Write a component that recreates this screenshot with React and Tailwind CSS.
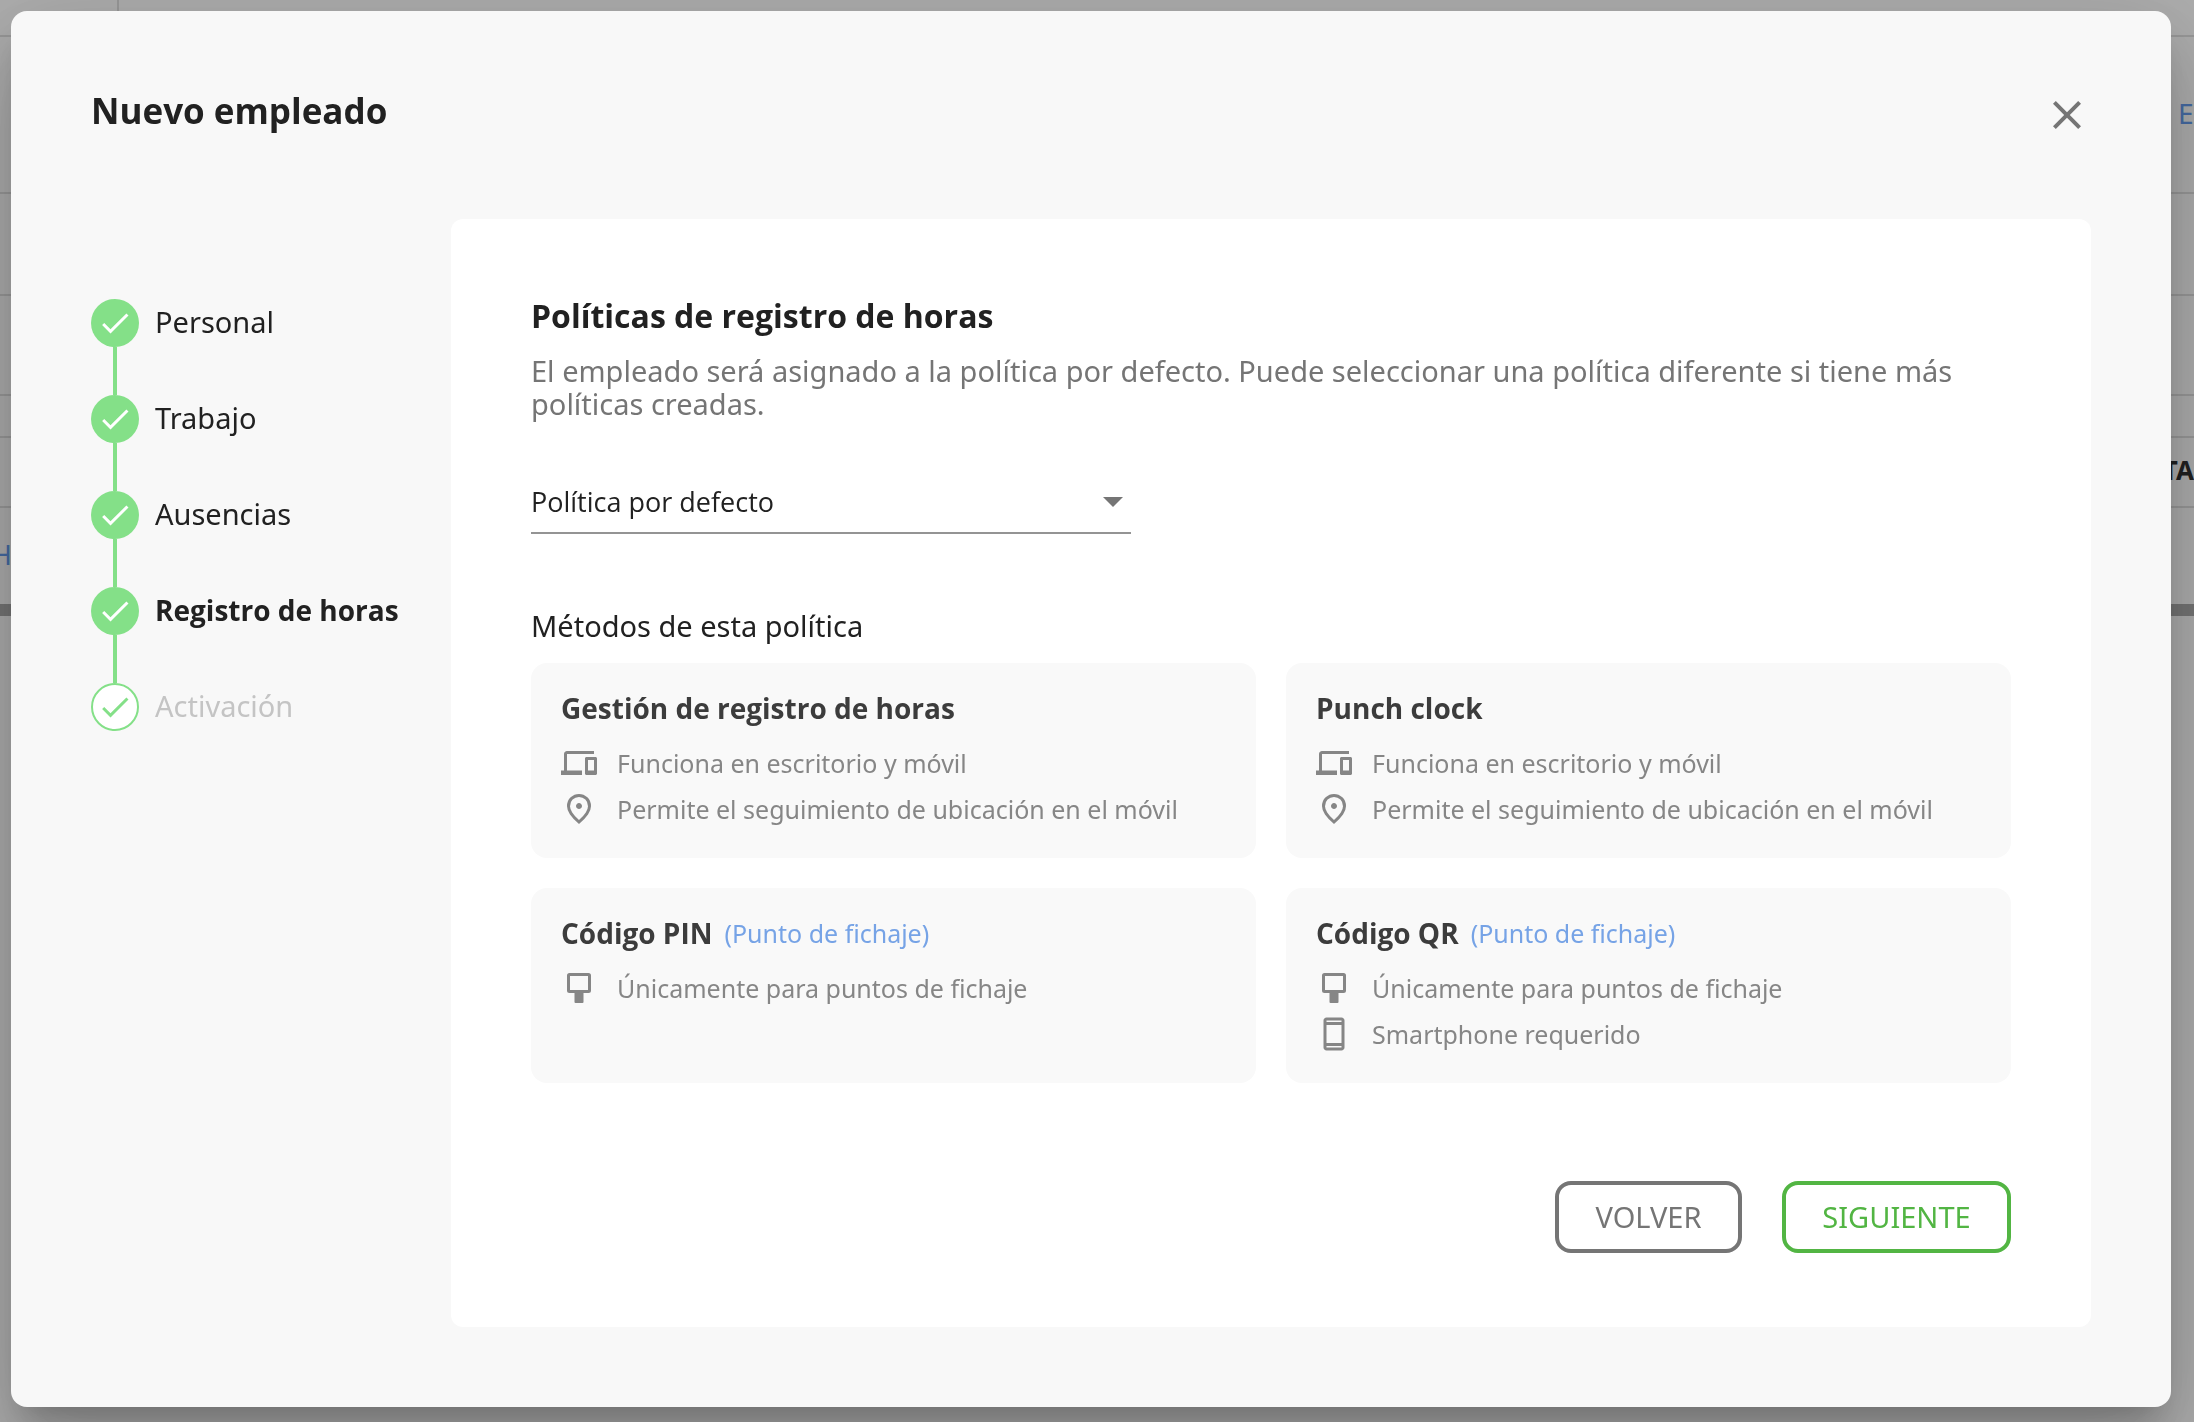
import React from "react";
import { MdCheck, MdClose, MdDevices } from "react-icons/md";

const steps = [
  { label: "Personal", state: "done" },
  { label: "Trabajo", state: "done" },
  { label: "Ausencias", state: "done" },
  { label: "Registro de horas", state: "current" },
  { label: "Activación", state: "pending" },
];

const PlaceIcon = () => (
  <svg viewBox="0 -960 960 960" className="size-9 shrink-0" fill="currentColor" aria-hidden="true">
    <path d="M480-480q33 0 56.5-23.5T560-560q0-33-23.5-56.5T480-640q-33 0-56.5 23.5T400-560q0 33 23.5 56.5T480-480Zm0 294q122-112 181-203.5T720-552q0-109-69.5-178.5T480-800q-101 0-170.5 69.5T240-552q0 71 59 162.5T480-186Zm0 106Q319-217 239.5-334.5T160-552q0-150 96.5-239T480-880q127 0 223.5 89T800-552q0 100-79.5 217.5T480-80Z" />
  </svg>
);

const KioskIcon = () => (
  <svg viewBox="0 0 36 36" className="size-9 shrink-0" aria-hidden="true">
    <rect x="7.5" y="4.5" width="21" height="17" rx="1" fill="none" stroke="currentColor" strokeWidth="3" />
    <path d="M13.5 22h9v10a1 1 0 0 1-1 1h-7a1 1 0 0 1-1-1z" fill="currentColor" />
  </svg>
);

const PhoneIcon = () => (
  <svg viewBox="0 0 24 24" className="size-9 shrink-0" fill="currentColor" aria-hidden="true">
    <path d="M17 1H7c-1.1 0-2 .9-2 2v18c0 1.1.9 2 2 2h10c1.1 0 2-.9 2-2V3c0-1.1-.9-2-2-2zM7 4V3h10v1H7zm0 14V6h10v12H7zm0 3v-1h10v1H7z" />
  </svg>
);

const DevicesIcon = () => <MdDevices className="size-9 shrink-0" />;

const methods = [
  {
    title: "Gestión de registro de horas",
    features: [
      { icon: DevicesIcon, text: "Funciona en escritorio y móvil" },
      { icon: PlaceIcon, text: "Permite el seguimiento de ubicación en el móvil" },
    ],
  },
  {
    title: "Punch clock",
    features: [
      { icon: DevicesIcon, text: "Funciona en escritorio y móvil" },
      { icon: PlaceIcon, text: "Permite el seguimiento de ubicación en el móvil" },
    ],
  },
  {
    title: "Código PIN",
    link: "(Punto de fichaje)",
    features: [{ icon: KioskIcon, text: "Únicamente para puntos de fichaje" }],
  },
  {
    title: "Código QR",
    link: "(Punto de fichaje)",
    features: [
      { icon: KioskIcon, text: "Únicamente para puntos de fichaje" },
      { icon: PhoneIcon, text: "Smartphone requerido" },
    ],
  },
];

// Page that stays visible around the edges of the dialog
const Backdrop = () => (
  <div className="min-h-screen bg-white text-[28px] leading-8" aria-hidden="true">
    <div className="flex h-[37px] border-b-2 border-[#e0e0e0]">
      <div className="w-[119px] border-r-2 border-[#e0e0e0]" />
    </div>
    <div className="flex h-[157px] items-center justify-end border-b-2 border-[#e0e0e0] pb-1">
      <span className="w-4 text-[#669df0]">E</span>
    </div>
    <div className="h-[102px] border-b-2 border-[#e0e0e0]" />
    <div className="h-[100px] border-b-2 border-[#e0e0e0]" />
    <div className="h-[42px] border-b-2 border-[#e0e0e0]" />
    <div className="flex h-[70px] items-center justify-end border-b-2 border-[#e0e0e0] pb-1">
      <span className="text-[26px] font-bold text-[#303030]">TA</span>
    </div>
    <div className="flex h-24 items-center pb-1">
      <span className="flex w-3 justify-end text-[#669df0]">H</span>
    </div>
    <div className="h-3 bg-[#acacac]" />
  </div>
);

const Stepper = () => (
  <ol className="flex w-[360px] shrink-0 flex-col pt-20">
    {steps.map(({ label, state }, index) => (
      <li
        key={label}
        className={`flex gap-4 leading-[46px] ${
          state === "pending"
            ? "text-[29px] text-[#c4c4c4]"
            : state === "current"
              ? "font-['Open_Sans',sans-serif] text-[28px] font-bold text-[#212121]"
              : "text-[29px] text-[#212121]"
        }`}
      >
        <div className="flex flex-col items-center">
          <span
            className={`flex size-12 items-center justify-center rounded-full ${
              state === "pending"
                ? "border-2 border-[#84e088] bg-white text-[#84e088]"
                : "bg-[#84e088] text-white"
            }`}
          >
            <MdCheck className="size-9 shrink-0" />
          </span>
          {index < steps.length - 1 && <span className="h-12 w-1 bg-[#84e088]" />}
        </div>
        <span className="whitespace-nowrap">{label}</span>
      </li>
    ))}
  </ol>
);

const MethodCard = ({ title, link, features }) => (
  <article className="rounded-2xl bg-[#f9f9f9] px-[30px] pt-6 pb-[31px]">
    <div className="flex items-center gap-3">
      <h3 className="font-['Open_Sans',sans-serif] text-[28px] leading-[42px] font-bold text-[#3c3c3c]">
        {title}
      </h3>
      {link && (
        <a href="#punto-de-fichaje" className="text-[25px] leading-9 text-[#76a3e6]">
          {link}
        </a>
      )}
    </div>
    <ul className="mt-4 flex flex-col gap-[10px] text-[25px] leading-9 text-[#868686]">
      {features.map(({ icon: Icon, text }) => (
        <li key={text} className="flex items-center gap-5">
          <Icon />
          <span>{text}</span>
        </li>
      ))}
    </ul>
  </article>
);

const App = () => {
  return (
    <div className="font-['Noto_Sans','Open_Sans',sans-serif]">
      <Backdrop />
      <div className="fixed inset-0 flex bg-black/32 pt-[11px] pr-[23px] pb-[15px] pl-[11px]">
        <div
          role="dialog"
          aria-labelledby="dialog-title"
          className="flex flex-1 flex-col rounded-2xl bg-[#f8f8f8] px-20 pb-20 shadow-[0_22px_30px_-14px_rgba(0,0,0,0.2),0_48px_76px_6px_rgba(0,0,0,0.14),0_18px_92px_16px_rgba(0,0,0,0.12)]"
        >
          <header className="flex items-start justify-between pt-20 pb-20">
            <h1
              id="dialog-title"
              className="font-['Open_Sans',sans-serif] text-[35px] leading-10 font-bold text-[#212121]"
            >
              Nuevo empleado
            </h1>
            <button type="button" aria-label="Cerrar" className="cursor-pointer text-[#757575]">
              <MdClose className="size-12" />
            </button>
          </header>

          <div className="flex flex-1">
            <Stepper />
            <main className="flex flex-1 flex-col rounded-xl bg-white px-20 pt-[77px] pb-[74px]">
              <h2 className="font-['Open_Sans',sans-serif] text-[32px] leading-10 font-bold text-[#212121]">
                Políticas de registro de horas
              </h2>
              <p className="mt-[18px] text-[29px] leading-[33px] text-[#757575]">
                El empleado será asignado a la política por defecto. Puede seleccionar una política
                diferente si tiene más políticas creadas.
              </p>

              <div className="mt-[52px] grid w-[600px] items-center border-b-2 border-[#949494]">
                <select
                  aria-label="Política"
                  className="col-start-1 row-start-1 h-[60px] appearance-none bg-transparent font-['Open_Sans',sans-serif] text-[27px] text-[#212121]"
                >
                  <option>Política por defecto</option>
                </select>
                <svg
                  viewBox="0 0 20 10"
                  className="pointer-events-none col-start-1 row-start-1 mr-2 w-5 justify-self-end text-[#757575]"
                  fill="currentColor"
                  aria-hidden="true"
                >
                  <path d="M0 0h20L10 10z" />
                </svg>
              </div>

              <h3 className="mt-[72px] text-[29px] leading-10 text-[#212121]">
                Métodos de esta política
              </h3>
              <div className="mt-[17px] grid grid-cols-2 gap-[30px]">
                {methods.map((method) => (
                  <MethodCard key={method.title} {...method} />
                ))}
              </div>

              <footer className="mt-auto flex justify-end gap-10">
                <button
                  type="button"
                  className="h-[72px] min-w-[187px] cursor-pointer rounded-2xl border-4 border-[#757575] px-6 text-[29px] leading-10 text-[#757575]"
                >
                  VOLVER
                </button>
                <button
                  type="button"
                  className="h-[72px] min-w-[229px] cursor-pointer rounded-2xl border-4 border-[#52b543] px-6 text-[29px] leading-10 text-[#52b543]"
                >
                  SIGUIENTE
                </button>
              </footer>
            </main>
          </div>
        </div>
      </div>
    </div>
  );
};

export default App;
